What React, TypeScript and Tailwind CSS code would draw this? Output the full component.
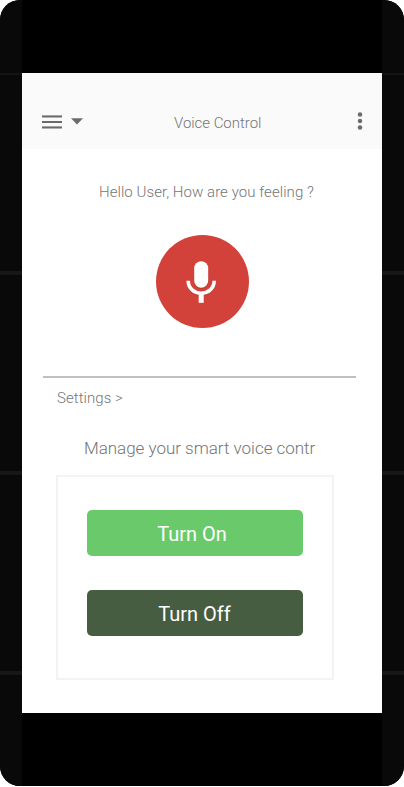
function Rail() {
  return (
    <div className="flex w-[22px] shrink-0 flex-col bg-[#090909]">
      <div className="mt-[73px] h-[2px] bg-[#141414]" />
      <div className="mt-[196px] h-[4px] bg-[#171717]" />
      <div className="mt-[196px] h-[4px] bg-[#171717]" />
      <div className="mt-[196px] h-[4px] bg-[#171717]" />
    </div>
  );
}

function Header() {
  return (
    <header className="flex h-[76px] items-start bg-[#fafafa] pt-[38px] pl-5 text-[#6b6b6b]">
      <svg className="mt-1 h-[15px] w-[20px]" viewBox="0 0 20 15" fill="currentColor">
        <rect y="0.4" width="20" height="2.1" />
        <rect y="6" width="20" height="2" />
        <rect y="11.4" width="20" height="2.1" />
      </svg>
      <svg className="mt-[7px] ml-[9px] h-[7px] w-[12px]" viewBox="0 0 12 7" fill="currentColor">
        <path d="M0 0.2H12L6 6.6Z" />
      </svg>
      <h1 className="ml-[91px] w-[90px] text-[15px] leading-6 font-light tracking-[-0.03px] whitespace-nowrap text-[#757575]">
        Voice Control
      </h1>
      <svg className="mt-[1px] ml-[93px] h-[18px] w-[6px]" viewBox="0 0 6 18" fill="currentColor">
        <circle cx="3" cy="2.4" r="2.25" />
        <circle cx="3" cy="9" r="2.25" />
        <circle cx="3" cy="15.6" r="2.25" />
      </svg>
    </header>
  );
}

function MicButton() {
  return (
    <button className="mt-[31px] ml-[134px] block size-[93px] rounded-full bg-[#d3423a]" aria-label="Voice">
      <svg className="size-[93px]" viewBox="0 0 93 93" fill="none">
        <path d="M32.2 46.8C32.2 54.4 38.2 59.2 45.2 59.2S58.2 54.4 58.2 46.8" stroke="#a8322c" strokeOpacity="0.5" strokeWidth="3.6" />
        <rect x="38" y="27.5" width="14.5" height="26.5" rx="7.25" fill="#a8322c" fillOpacity="0.5" />
        <rect x="38.2" y="26.3" width="14" height="26.5" rx="7" fill="white" />
        <path d="M32.2 45.8C32.2 53.4 38.2 58.2 45.2 58.2S58.2 53.4 58.2 45.8" stroke="white" strokeWidth="3.6" />
        <rect x="42.7" y="57" width="5" height="10.8" fill="white" />
      </svg>
    </button>
  );
}

export default function App() {
  return (
    <div className="h-[787px] w-[404px] bg-white font-[Roboto,sans-serif]">
      <div className="flex h-[786px] overflow-hidden rounded-[20px] bg-black">
        <Rail />
        <div className="flex w-[360px] flex-col bg-black py-[73px]">
          <main className="h-[640px] bg-white text-[#757575]">
            <Header />
            <p className="mt-[31px] ml-[77px] text-[15px] leading-6 font-light tracking-[0.06px] whitespace-nowrap">
              Hello User, How are you feeling ?
            </p>
            <MicButton />
            <hr className="mt-[48px] ml-[21px] h-[2px] w-[313px] border-0 bg-[#c0c0c0]" />
            <p className="mt-2 ml-[35px] text-[15px] leading-6 font-light tracking-[0.06px]">Settings &gt;</p>
            <p className="mt-[26px] ml-[62px] h-6 w-[231px] overflow-hidden text-[17px] leading-6 font-light tracking-[-0.02px] whitespace-nowrap">
              Manage your smart voice control
            </p>
            <section className="mt-[15px] ml-[34px] flex h-[205px] w-[278px] flex-col gap-[34px] border-2 border-[#f3f3f3] pt-[33px] pl-[29px] text-[20px] text-white">
              <button className="h-[46px] w-[216px] rounded-[5px] bg-[#6aca6b] pt-[2px] pr-[6px]">Turn On</button>
              <button className="h-[46px] w-[216px] rounded-[5px] bg-[#465d42] pt-[2px] pr-[1px]">Turn Off</button>
            </section>
          </main>
        </div>
        <Rail />
      </div>
    </div>
  );
}
